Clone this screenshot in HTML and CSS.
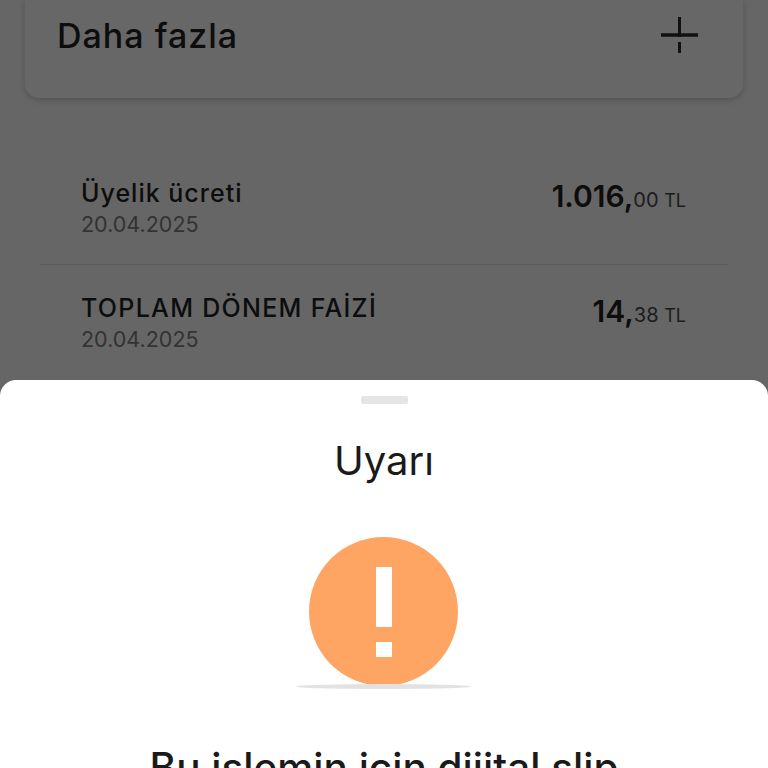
FILE: index.html
```html
<!DOCTYPE html>
<html lang="tr">
<head>
  <meta charset="UTF-8">
  <title>Uyarı</title>
  <link rel="stylesheet" href="styles.css">
</head>
<body>

  <div class="screen">
    <div class="more-card">
      <span class="more-title">Daha fazla</span>
      <svg class="plus" width="37" height="37" viewBox="0 0 37 37">
        <path d="M18.5 0V20M18.5 25V36" stroke="#111" stroke-width="3" fill="none"/>
        <path d="M0 18H37" stroke="#111" stroke-width="3.5" fill="none"/>
      </svg>
    </div>

    <div class="rows">
      <div class="row">
        <div>
          <div class="row-name">Üyelik ücreti</div>
          <div class="row-date">20.04.2025</div>
        </div>
        <div class="amount"><b>1.016,</b>00 <span class="cur">TL</span></div>
      </div>
      <div class="row">
        <div>
          <div class="row-name caps">TOPLAM DÖNEM FAİZİ</div>
          <div class="row-date">20.04.2025</div>
        </div>
        <div class="amount"><b>14,</b>38 <span class="cur">TL</span></div>
      </div>
    </div>

    <div class="sheet">
      <div class="handle"></div>
      <h2 class="sheet-title">Uyarı</h2>
      <div class="warn">
        <div class="warn-circle">
          <span class="warn-bar"></span>
          <span class="warn-dot"></span>
        </div>
        <div class="warn-shadow"></div>
      </div>
      <p class="message">Bu işlemin için dijital slip</p>
    </div>
  </div>

</body>
</html>
```

FILE: styles.css
```css
body {
  margin: 0;
  font-family: "Inter", "Lato", sans-serif;
  background-color: #666666;
  color: #111;
}
.screen {
  height: 768px;
  overflow: hidden;
}
.more-card {
  height: 98px;
  margin: 0 25px;
  padding: 0 45px 27px 32px;
  box-sizing: border-box;
  display: flex;
  justify-content: space-between;
  align-items: center;
  background-color: #676767;
  border-radius: 0 0 14px 14px;
  box-shadow: 0 2px 6px rgba(0,0,0,0.2);
}
.more-title {
  font-size: 34px;
  font-weight: 500;
  letter-spacing: 1px;
  color: #0d0d0d;
}
.plus {
  display: block;
}
.rows {
  margin: 52px 40px 0;
  height: 230px;
}
.row {
  height: 114px;
  padding: 28px 42px 0 41px;
  box-sizing: border-box;
  display: flex;
  justify-content: space-between;
  align-items: flex-start;
}
.row:first-child {
  height: 115px;
  border-bottom: 1px solid #5c5c5c;
}
.row-name {
  font-size: 25px;
  line-height: 30px;
  font-weight: 500;
  letter-spacing: 1px;
  color: #0d0d0d;
}
.caps {
  letter-spacing: 1.3px;
}
.row-date {
  font-size: 21.5px;
  line-height: 30px;
  margin-top: 1px;
  color: #333;
}
.amount {
  font-size: 20px;
  line-height: 36px;
  color: #1c1c1c;
}
.amount b {
  font-size: 30px;
  font-weight: 600;
  color: #0d0d0d;
}
.cur {
  font-size: 18px;
}
.sheet {
  height: 388px;
  box-sizing: border-box;
  padding-top: 16px;
  background-color: white;
  border-radius: 16px 16px 0 0;
  display: flex;
  flex-direction: column;
  align-items: center;
}
.sheet > * {
  flex-shrink: 0;
}
.handle {
  width: 47px;
  height: 8px;
  background-color: #e5e5e5;
  border-radius: 2px;
}
.sheet-title {
  margin: 34px 0 0;
  font-size: 40px;
  line-height: 46px;
  font-weight: 400;
  color: #1a1a1a;
}
.warn {
  margin: 53px 0 0 -1px;
  display: flex;
  flex-direction: column;
  align-items: center;
}
.warn-circle {
  width: 149px;
  height: 149px;
  border-radius: 50%;
  background-color: #ffa564;
  display: flex;
  flex-direction: column;
  align-items: center;
  padding-top: 30px;
  box-sizing: border-box;
}
.warn-bar {
  width: 16px;
  height: 60px;
  background-color: white;
}
.warn-dot {
  width: 16px;
  height: 15px;
  margin-top: 15px;
  background-color: white;
}
.warn-shadow {
  width: 175px;
  height: 5px;
  margin-top: -2px;
  border-radius: 50%;
  background-color: #e2e2e2;
}
.message {
  margin: 57px 0 0;
  font-size: 40.5px;
  line-height: 44px;
  font-weight: 500;
  white-space: nowrap;
  color: #1a1a1a;
}
```
